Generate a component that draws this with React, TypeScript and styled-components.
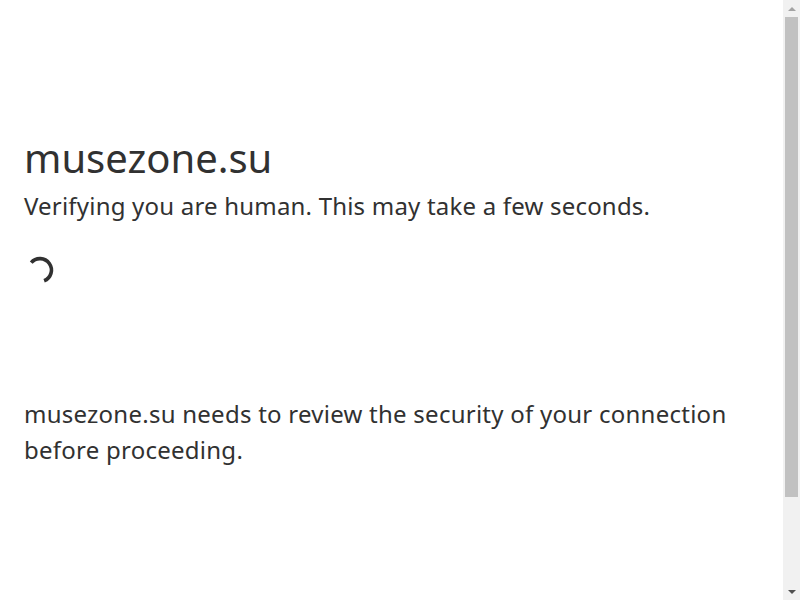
import styled, { createGlobalStyle } from "styled-components";

const GlobalStyle = createGlobalStyle`
  html, body {
    margin: 0;
    padding: 0;
    background-color: #fff;
    color: #313131;
    font-family: "Noto Sans", "Open Sans", Roboto, "Liberation Sans", sans-serif;
  }
  * {
    box-sizing: border-box;
  }
`;

const Window = styled.div`
  display: flex;
  height: 100vh;
  overflow: hidden;
`;

const Viewport = styled.div`
  flex: 1;
  display: flex;
  flex-direction: column;
  align-items: center;
  overflow: hidden;
`;

const MainContent = styled.div`
  margin: 128px auto 0;
  max-width: 960px;
  width: 100%;
  padding-left: 24px;
  padding-right: 24px;
`;

const Title = styled.h1`
  margin: 0;
  font-size: 40px;
  line-height: 60px;
  font-weight: 400;
`;

const Subtitle = styled.h2`
  margin: 0;
  font-size: 24px;
  line-height: 36px;
  font-weight: 400;
  letter-spacing: 0.2px;
`;

const Stage = styled.div`
  display: flex;
  align-items: flex-start;
  height: 172px;
  padding-top: 31px;
  padding-left: 1px;
`;

const Spinner = styled.svg`
  width: 30px;
  height: 30px;
`;

const BodyText = styled.div`
  font-size: 24px;
  line-height: 36px;
  letter-spacing: 0.25px;
`;

const ScrollBar = styled.div`
  width: 17px;
  flex-shrink: 0;
  display: flex;
  flex-direction: column;
  background: #f1f1f1;
`;

const ScrollButton = styled.div`
  height: 17px;
  display: flex;
  align-items: center;
  justify-content: center;
`;

const Track = styled.div`
  flex: 1;
  padding: 0 2px;
`;

const Thumb = styled.div`
  height: 480px;
  background: #c1c1c1;
`;

export default function App() {
  return (
    <Window>
      <GlobalStyle />
      <Viewport>
        <MainContent>
          <Title>musezone.su</Title>
          <Subtitle>Verifying you are human. This may take a few seconds.</Subtitle>
          <Stage>
            <Spinner viewBox="0 0 30 30">
              <path
                d="M 6.2 7.6 A 11.5 11.5 0 1 1 19.1 25.8"
                fill="none"
                stroke="#313131"
                strokeWidth="3.6"
                strokeLinecap="butt"
              />
            </Spinner>
          </Stage>
          <BodyText>musezone.su needs to review the security of your connection before proceeding.</BodyText>
        </MainContent>
      </Viewport>
      <ScrollBar>
        <ScrollButton>
          <svg width="8" height="4" viewBox="0 0 8 4">
            <path d="M0 4 L4 0 L8 4 Z" fill="#a3a3a3" />
          </svg>
        </ScrollButton>
        <Track>
          <Thumb />
        </Track>
        <ScrollButton>
          <svg width="8" height="4" viewBox="0 0 8 4">
            <path d="M0 0 L8 0 L4 4 Z" fill="#505050" />
          </svg>
        </ScrollButton>
      </ScrollBar>
    </Window>
  );
}
